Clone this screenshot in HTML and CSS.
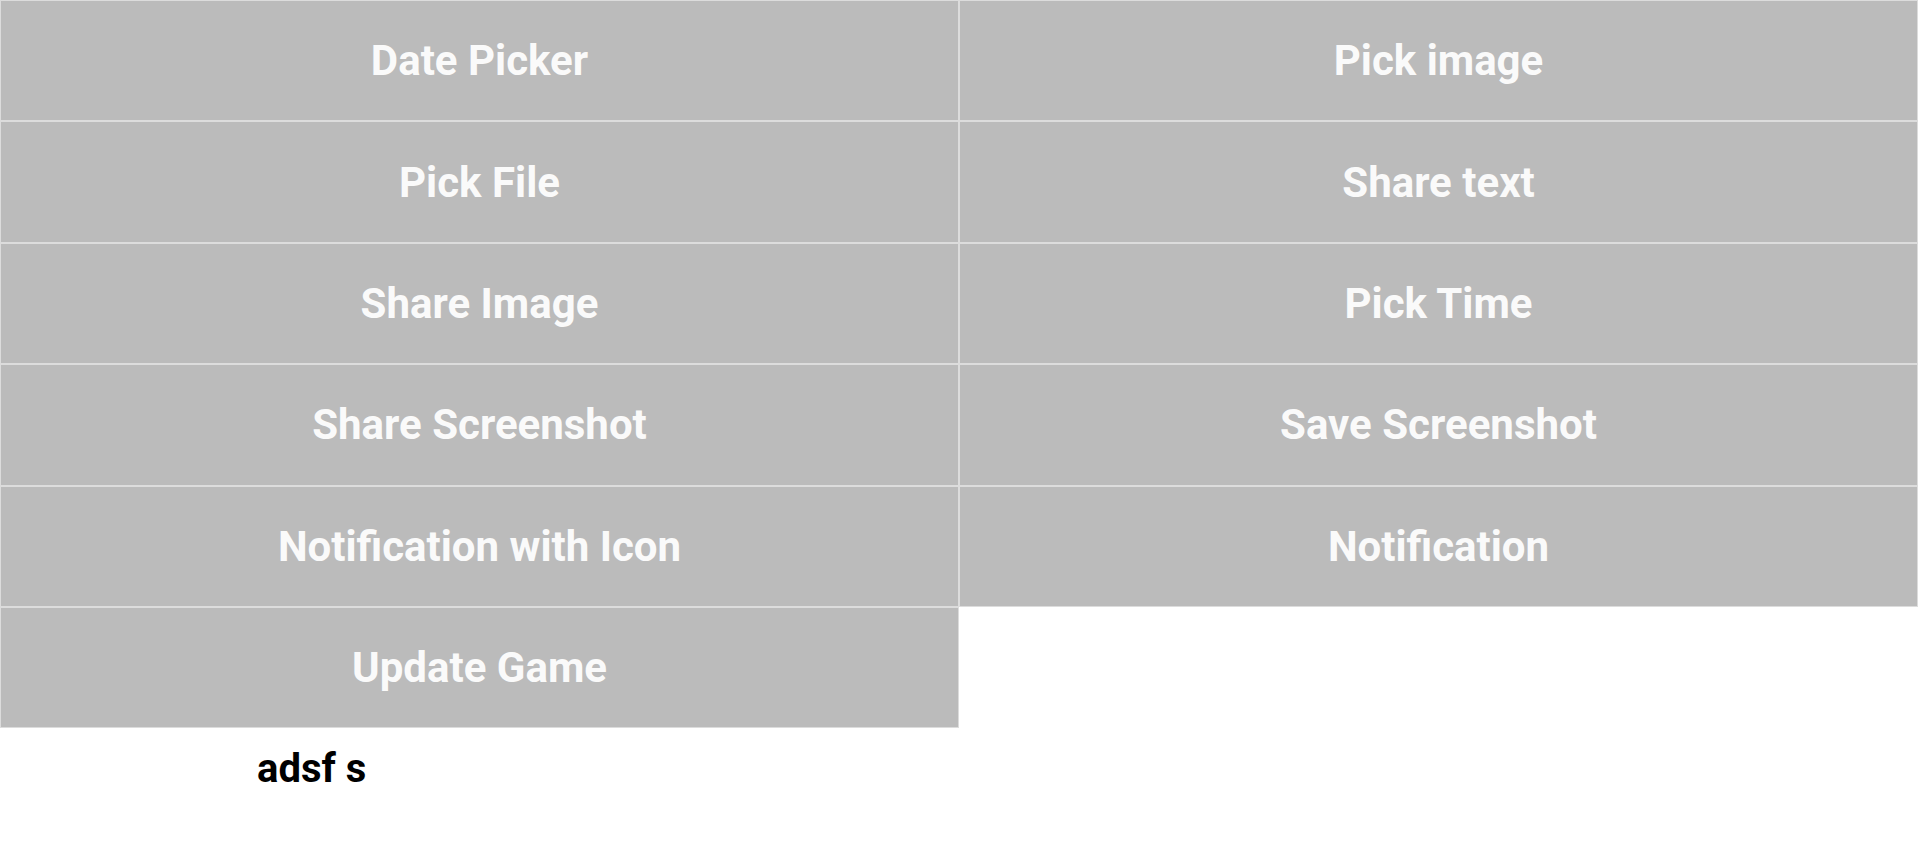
FILE: index.html
```html
<!DOCTYPE html>
<html lang="en">
  <head>
    <meta charset="UTF-8" />
    <meta name="viewport" content="width=device-width, initial-scale=1.0" />
    <title>Plugin Demo</title>
    <link rel="stylesheet" href="styles.css">
  </head>
  <body>
    <div class="demo-container">
      <!-- Button grid -->
      <div class="button-grid">
        <button class="demo-button">Date Picker</button>
        <button class="demo-button">Pick image</button>
        <button class="demo-button">Pick File</button>
        <button class="demo-button">Share text</button>
        <button class="demo-button">Share Image</button>
        <button class="demo-button">Pick Time</button>
        <button class="demo-button">Share Screenshot</button>
        <button class="demo-button">Save Screenshot</button>
        <button class="demo-button">Notification with Icon</button>
        <button class="demo-button">Notification</button>
        <button class="demo-button">Update Game</button>
      </div>

      <!-- Status text -->
      <div class="status-text">adsf s</div>
    </div>
  </body>
</html>
```

FILE: styles.css
```css
* {
  margin: 0;
  padding: 0;
  box-sizing: border-box;
  font-family: 'Roboto', 'Liberation Sans', sans-serif;
}

html,
body {
  height: 100%;
  width: 100%;
  background-color: #ffffff;
}

.demo-container {
  width: 100%;
  height: 100%;
}

.button-grid {
  display: grid;
  grid-template-columns: 959px 959px;
  grid-auto-rows: 121.4px;
}

.demo-button {
  background-color: #bbbbbb;
  border: 1px solid #dcdcdc;
  color: #fafafa;
  font-size: 42px;
  font-weight: bold;
  cursor: pointer;
}

.status-text {
  margin-top: 20px;
  margin-left: 257px;
  font-size: 40px;
  line-height: 42px;
  font-weight: bold;
  color: #000000;
}
```
